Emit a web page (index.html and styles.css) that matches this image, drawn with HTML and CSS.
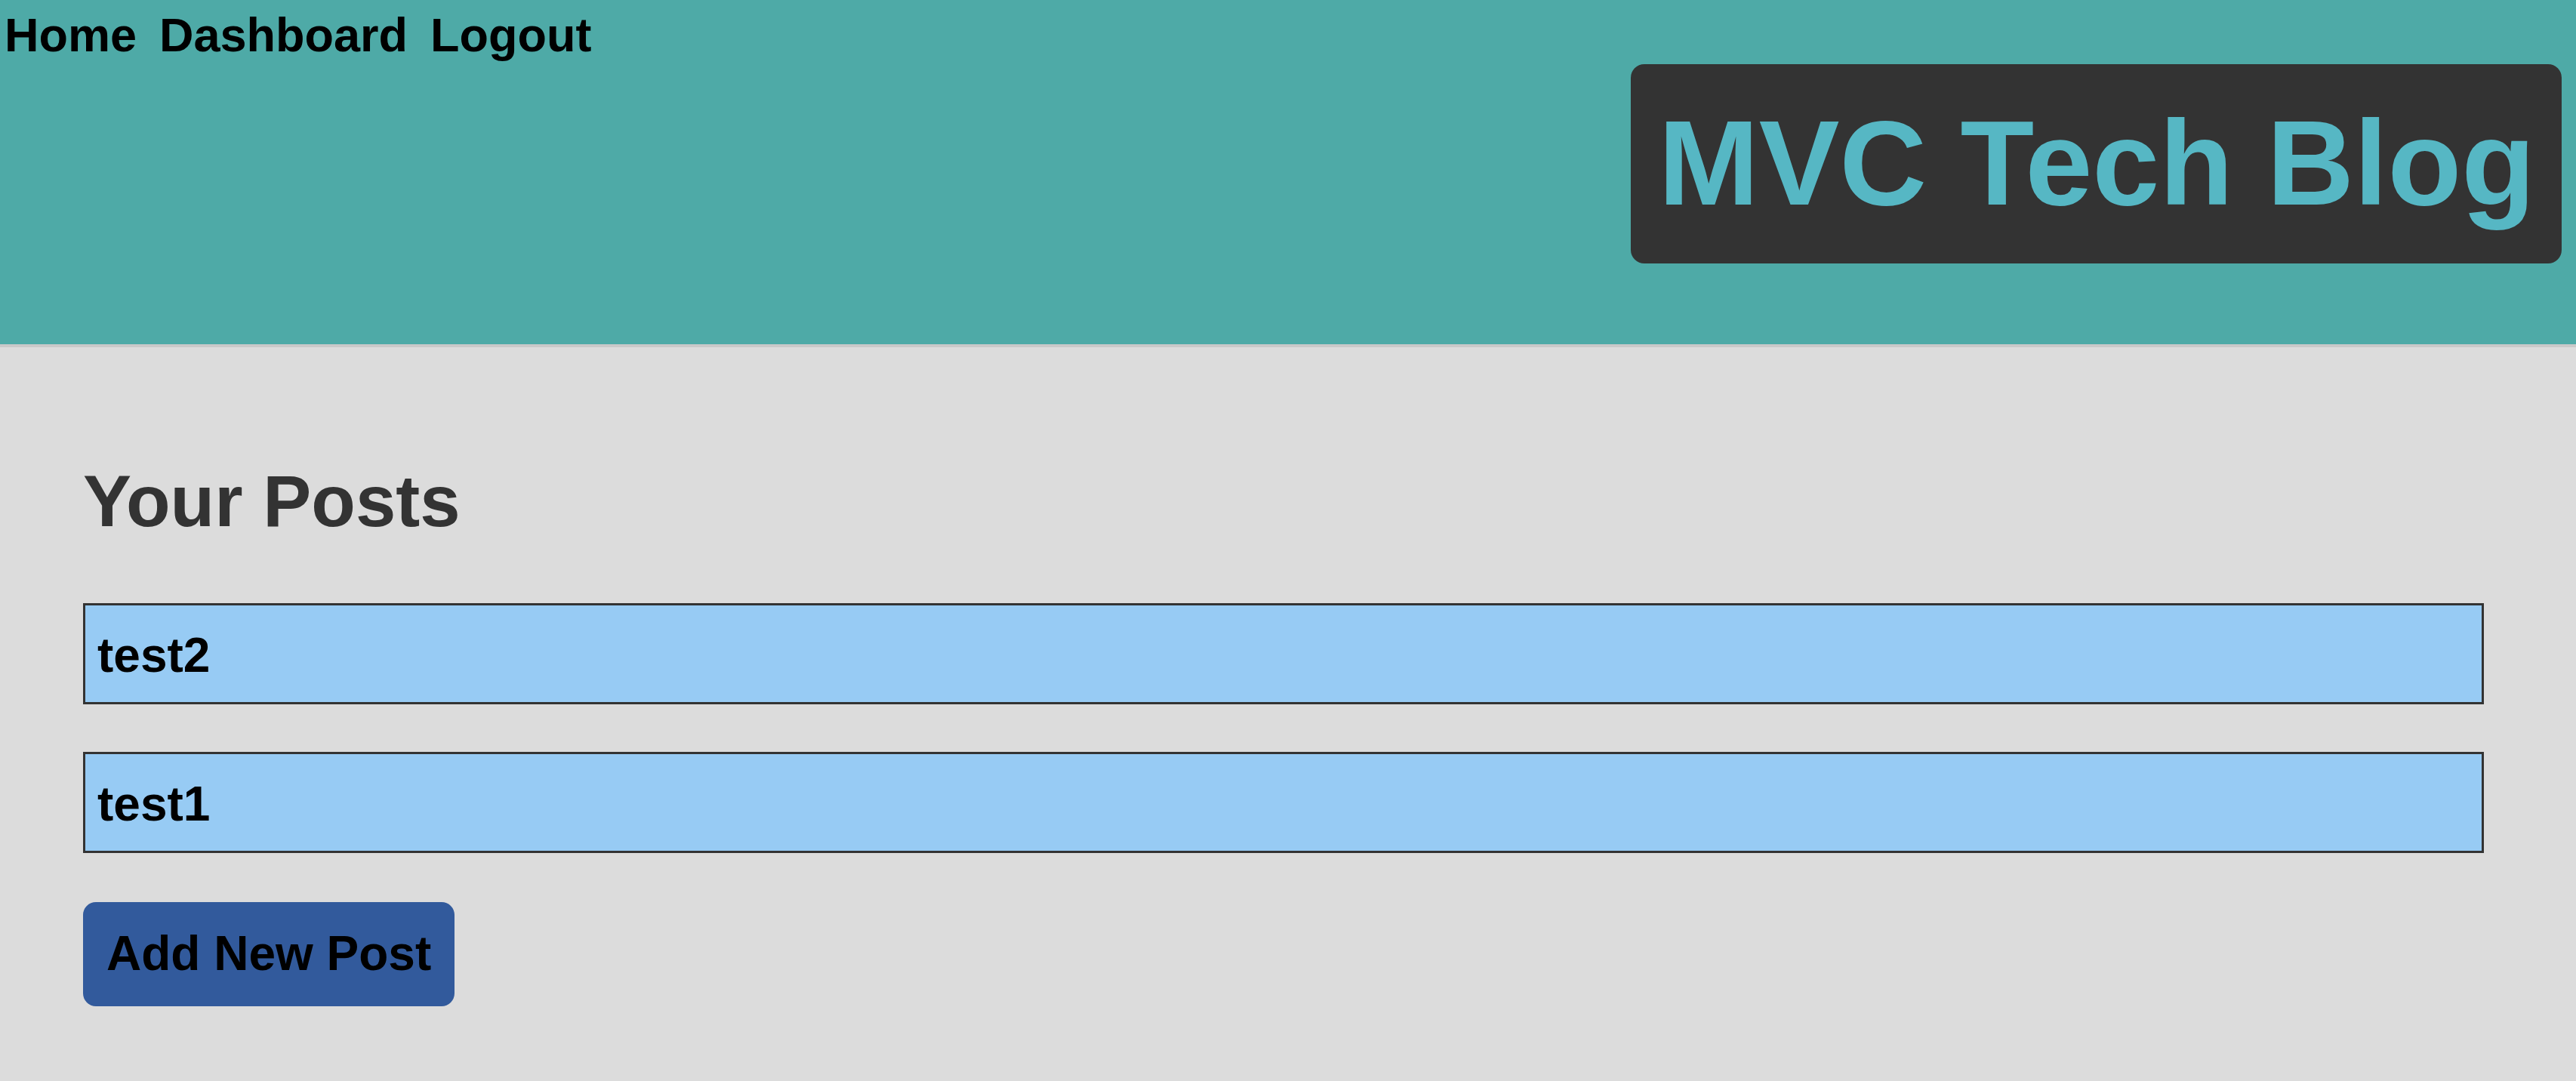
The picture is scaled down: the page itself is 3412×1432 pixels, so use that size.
FILE: index.html
```html
<!DOCTYPE html>
<html lang="en">
<head>
<meta charset="utf-8">
<title>MVC Tech Blog</title>
<link rel="stylesheet" href="styles.css">
</head>
<body>
<header class="site-header">
  <nav class="nav">
    <a class="nav-link" href="#">Home</a>
    <a class="nav-link" href="#">Dashboard</a>
    <a class="nav-link" href="#">Logout</a>
  </nav>
  <div class="brand"><h1 class="brand-title">MVC Tech Blog</h1></div>
</header>
<main class="dashboard">
  <h2 class="section-title">Your Posts</h2>
  <div class="post-list">
    <div class="post-card"><h3 class="post-title">test2</h3></div>
    <div class="post-card"><h3 class="post-title">test1</h3></div>
  </div>
  <button class="add-btn" type="button">Add New Post</button>
</main>
</body>
</html>
```
FILE: styles.css
```css
html, body {
  margin: 0;
  padding: 0;
}
body {
  font-family: "Liberation Sans", Arial, Helvetica, sans-serif;
  background: #dcdcdc;
}
.site-header {
  background: #4eaaa7;
  height: 456px;
  border-bottom: 4px solid #c9c9c9;
  display: flex;
  flex-direction: column;
}
.nav {
  display: flex;
  gap: 30px;
  padding: 9px 0 0 6px;
}
.nav-link {
  color: #000;
  text-decoration: none;
  font-weight: bold;
  font-size: 63px;
  line-height: 74px;
}
.brand {
  align-self: flex-end;
  margin: 2px 19px 0 0;
  background: #333333;
  border-radius: 18px;
  padding: 39px 35px 41px 37px;
}
.brand-title {
  margin: 0;
  font-size: 160px;
  line-height: normal;
  font-weight: bold;
  color: #56b7c4;
}
.dashboard {
  padding: 148px 122px 20px 110px;
}
.section-title {
  margin: 0;
  font-size: 96px;
  line-height: 112px;
  font-weight: bold;
  color: #333333;
}
.post-list {
  margin-top: 79px;
  display: flex;
  flex-direction: column;
  gap: 63px;
}
.post-card {
  border: 3px solid #333333;
  background: #97cbf4;
  padding: 29px 16px 24px;
}
.post-title {
  margin: 0;
  font-size: 64px;
  line-height: 75px;
  font-weight: bold;
  color: #000;
}
.add-btn {
  display: block;
  margin-top: 65px;
  background: #325a9c;
  border: none;
  border-radius: 17px;
  padding: 31px 31px 32px;
  font-family: inherit;
  font-size: 64px;
  line-height: 75px;
  font-weight: bold;
  color: #000;
  cursor: pointer;
}
```
